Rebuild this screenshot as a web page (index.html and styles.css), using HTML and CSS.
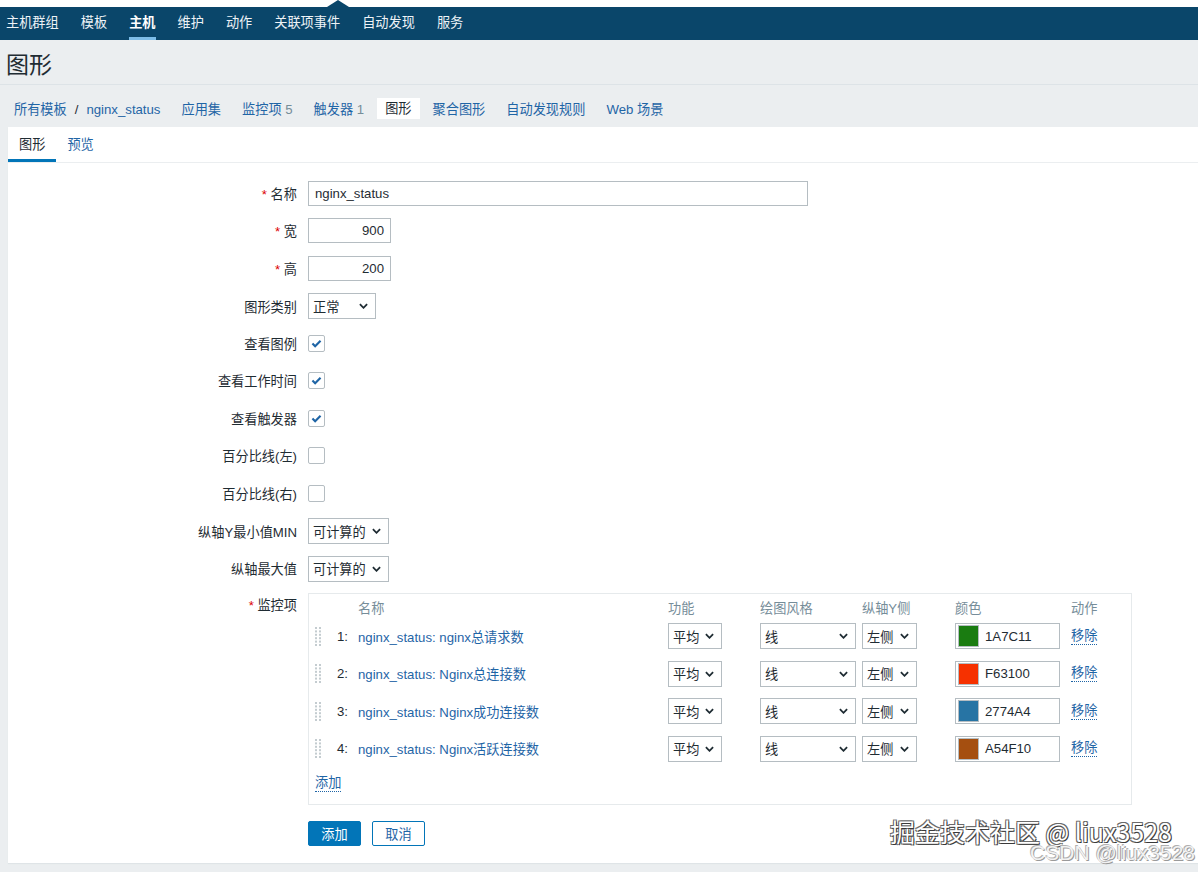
FILE: index.html
```html
<!DOCTYPE html>
<html lang="zh-CN">
<head>
<meta charset="utf-8">
<title>图形</title>
<link rel="stylesheet" href="styles.css">
</head>
<body>
<div class="topstrip"></div>
<nav class="mainnav">
  <a class="nav-item">主机群组</a>
  <a class="nav-item">模板</a>
  <a class="nav-item active">主机</a>
  <a class="nav-item">维护</a>
  <a class="nav-item">动作</a>
  <a class="nav-item">关联项事件</a>
  <a class="nav-item">自动发现</a>
  <a class="nav-item">服务</a>
</nav>
<header class="page-title"><h1>图形</h1></header>
<nav class="crumbs">
  <span class="crumb"><a>所有模板</a><span class="sep">/</span><a>nginx_status</a></span>
  <a class="crumb">应用集</a>
  <a class="crumb">监控项 <span class="count">5</span></a>
  <a class="crumb">触发器 <span class="count">1</span></a>
  <span class="crumb current">图形</span>
  <a class="crumb">聚合图形</a>
  <a class="crumb">自动发现规则</a>
  <a class="crumb">Web 场景</a>
</nav>
<main class="panel">
  <div class="tabs">
    <span class="tab active">图形</span>
    <a class="tab">预览</a>
  </div>
  <form class="form">
    <div class="row">
      <label class="lbl"><span class="req">*</span> 名称</label>
      <div class="field"><span class="input w500">nginx_status</span></div>
    </div>
    <div class="row">
      <label class="lbl"><span class="req">*</span> 宽</label>
      <div class="field"><span class="input num w83">900</span></div>
    </div>
    <div class="row">
      <label class="lbl"><span class="req">*</span> 高</label>
      <div class="field"><span class="input num w83">200</span></div>
    </div>
    <div class="row">
      <label class="lbl">图形类别</label>
      <div class="field"><span class="sel w68"><span>正常</span><svg class="chev" viewBox="0 0 10 6"><path d="M1 1l4 4 4-4"/></svg></span></div>
    </div>
    <div class="row">
      <label class="lbl">查看图例</label>
      <div class="field"><span class="cb checked"><svg viewBox="0 0 12 10"><path d="M1.5 5l3 3 6-6"/></svg></span></div>
    </div>
    <div class="row">
      <label class="lbl">查看工作时间</label>
      <div class="field"><span class="cb checked"><svg viewBox="0 0 12 10"><path d="M1.5 5l3 3 6-6"/></svg></span></div>
    </div>
    <div class="row">
      <label class="lbl">查看触发器</label>
      <div class="field"><span class="cb checked"><svg viewBox="0 0 12 10"><path d="M1.5 5l3 3 6-6"/></svg></span></div>
    </div>
    <div class="row">
      <label class="lbl">百分比线(左)</label>
      <div class="field"><span class="cb"></span></div>
    </div>
    <div class="row">
      <label class="lbl">百分比线(右)</label>
      <div class="field"><span class="cb"></span></div>
    </div>
    <div class="row">
      <label class="lbl">纵轴Y最小值MIN</label>
      <div class="field"><span class="sel w81"><span>可计算的</span><svg class="chev" viewBox="0 0 10 6"><path d="M1 1l4 4 4-4"/></svg></span></div>
    </div>
    <div class="row">
      <label class="lbl">纵轴最大值</label>
      <div class="field"><span class="sel w81"><span>可计算的</span><svg class="chev" viewBox="0 0 10 6"><path d="M1 1l4 4 4-4"/></svg></span></div>
    </div>
    <div class="row items-row">
      <label class="lbl"><span class="req">*</span> 监控项</label>
      <div class="field">
        <div class="items">
          <div class="irow ihead">
            <span></span><span></span><span>名称</span><span>功能</span><span>绘图风格</span><span>纵轴Y侧</span><span>颜色</span><span>动作</span>
          </div>
          <div class="irow item">
            <span class="drag"><svg viewBox="0 0 7 19"><g><rect x="0" y="0" width="2" height="2"/><rect x="4" y="0" width="2" height="2"/><rect x="0" y="3.4" width="2" height="2"/><rect x="4" y="3.4" width="2" height="2"/><rect x="0" y="6.8" width="2" height="2"/><rect x="4" y="6.8" width="2" height="2"/><rect x="0" y="10.2" width="2" height="2"/><rect x="4" y="10.2" width="2" height="2"/><rect x="0" y="13.6" width="2" height="2"/><rect x="4" y="13.6" width="2" height="2"/><rect x="0" y="17" width="2" height="2"/><rect x="4" y="17" width="2" height="2"/></g></svg></span>
            <span class="no">1:</span>
            <a class="link">nginx_status: nginx总请求数</a>
            <span class="sel w54"><span>平均</span><svg class="chev" viewBox="0 0 10 6"><path d="M1 1l4 4 4-4"/></svg></span>
            <span class="sel w96"><span>线</span><svg class="chev" viewBox="0 0 10 6"><path d="M1 1l4 4 4-4"/></svg></span>
            <span class="sel w55"><span>左侧</span><svg class="chev" viewBox="0 0 10 6"><path d="M1 1l4 4 4-4"/></svg></span>
            <span class="color"><span class="swatch" style="background:#1A7C11"></span>1A7C11</span>
            <a class="dotted">移除</a>
          </div>
          <div class="irow item">
            <span class="drag"><svg viewBox="0 0 7 19"><g><rect x="0" y="0" width="2" height="2"/><rect x="4" y="0" width="2" height="2"/><rect x="0" y="3.4" width="2" height="2"/><rect x="4" y="3.4" width="2" height="2"/><rect x="0" y="6.8" width="2" height="2"/><rect x="4" y="6.8" width="2" height="2"/><rect x="0" y="10.2" width="2" height="2"/><rect x="4" y="10.2" width="2" height="2"/><rect x="0" y="13.6" width="2" height="2"/><rect x="4" y="13.6" width="2" height="2"/><rect x="0" y="17" width="2" height="2"/><rect x="4" y="17" width="2" height="2"/></g></svg></span>
            <span class="no">2:</span>
            <a class="link">nginx_status: Nginx总连接数</a>
            <span class="sel w54"><span>平均</span><svg class="chev" viewBox="0 0 10 6"><path d="M1 1l4 4 4-4"/></svg></span>
            <span class="sel w96"><span>线</span><svg class="chev" viewBox="0 0 10 6"><path d="M1 1l4 4 4-4"/></svg></span>
            <span class="sel w55"><span>左侧</span><svg class="chev" viewBox="0 0 10 6"><path d="M1 1l4 4 4-4"/></svg></span>
            <span class="color"><span class="swatch" style="background:#F63100"></span>F63100</span>
            <a class="dotted">移除</a>
          </div>
          <div class="irow item">
            <span class="drag"><svg viewBox="0 0 7 19"><g><rect x="0" y="0" width="2" height="2"/><rect x="4" y="0" width="2" height="2"/><rect x="0" y="3.4" width="2" height="2"/><rect x="4" y="3.4" width="2" height="2"/><rect x="0" y="6.8" width="2" height="2"/><rect x="4" y="6.8" width="2" height="2"/><rect x="0" y="10.2" width="2" height="2"/><rect x="4" y="10.2" width="2" height="2"/><rect x="0" y="13.6" width="2" height="2"/><rect x="4" y="13.6" width="2" height="2"/><rect x="0" y="17" width="2" height="2"/><rect x="4" y="17" width="2" height="2"/></g></svg></span>
            <span class="no">3:</span>
            <a class="link">nginx_status: Nginx成功连接数</a>
            <span class="sel w54"><span>平均</span><svg class="chev" viewBox="0 0 10 6"><path d="M1 1l4 4 4-4"/></svg></span>
            <span class="sel w96"><span>线</span><svg class="chev" viewBox="0 0 10 6"><path d="M1 1l4 4 4-4"/></svg></span>
            <span class="sel w55"><span>左侧</span><svg class="chev" viewBox="0 0 10 6"><path d="M1 1l4 4 4-4"/></svg></span>
            <span class="color"><span class="swatch" style="background:#2774A4"></span>2774A4</span>
            <a class="dotted">移除</a>
          </div>
          <div class="irow item">
            <span class="drag"><svg viewBox="0 0 7 19"><g><rect x="0" y="0" width="2" height="2"/><rect x="4" y="0" width="2" height="2"/><rect x="0" y="3.4" width="2" height="2"/><rect x="4" y="3.4" width="2" height="2"/><rect x="0" y="6.8" width="2" height="2"/><rect x="4" y="6.8" width="2" height="2"/><rect x="0" y="10.2" width="2" height="2"/><rect x="4" y="10.2" width="2" height="2"/><rect x="0" y="13.6" width="2" height="2"/><rect x="4" y="13.6" width="2" height="2"/><rect x="0" y="17" width="2" height="2"/><rect x="4" y="17" width="2" height="2"/></g></svg></span>
            <span class="no">4:</span>
            <a class="link">nginx_status: Nginx活跃连接数</a>
            <span class="sel w54"><span>平均</span><svg class="chev" viewBox="0 0 10 6"><path d="M1 1l4 4 4-4"/></svg></span>
            <span class="sel w96"><span>线</span><svg class="chev" viewBox="0 0 10 6"><path d="M1 1l4 4 4-4"/></svg></span>
            <span class="sel w55"><span>左侧</span><svg class="chev" viewBox="0 0 10 6"><path d="M1 1l4 4 4-4"/></svg></span>
            <span class="color"><span class="swatch" style="background:#A54F10"></span>A54F10</span>
            <a class="dotted">移除</a>
          </div>
          <div class="add-row"><a class="dotted">添加</a></div>
        </div>
      </div>
    </div>
    <div class="buttons">
      <button type="button" class="btn primary">添加</button>
      <button type="button" class="btn">取消</button>
    </div>
  </form>
</main>
<div class="watermark">
  <div class="wm1">掘金技术社区 @ liux3528</div>
  <div class="wm2">CSDN @liux3528</div>
</div>
</body>
</html>
```

FILE: styles.css
```css
* { box-sizing: border-box; }
html, body { margin: 0; padding: 0; }
body {
  background: #ebeef0;
  color: #1f2c33;
  font-family: "Liberation Sans", Arial, "Noto Sans CJK SC", sans-serif;
  font-size: 13.2px;
  width: 1198px;
  height: 872px;
  overflow: hidden;
  position: relative;
}
a { color: #1f65a6; text-decoration: none; cursor: pointer; }

/* top strip + main nav */
.topstrip {
  height: 7px;
  background: #fff;
  position: relative;
}
.topstrip::after {
  content: "";
  position: absolute;
  left: 327px;
  bottom: 0;
  border-left: 11px solid transparent;
  border-right: 11px solid transparent;
  border-bottom: 7px solid #0a466a;
}
.mainnav {
  height: 33px;
  background: #0a466a;
  display: flex;
  gap: 22px;
  padding-left: 6px;
}
.nav-item {
  color: #eef3f7;
  line-height: 28px;
  padding-top: 2px;
  border-bottom: 3px solid transparent;
}
.nav-item.active {
  color: #fff;
  font-weight: bold;
  border-bottom-color: #7dbde8;
}

/* page title */
.page-title {
  height: 45px;
  border-bottom: 1px solid #dde3e7;
  padding: 9px 6px 0;
}
.page-title h1 {
  margin: 0;
  font-size: 23px;
  font-weight: normal;
  line-height: 32px;
  color: #1f2c33;
}

/* breadcrumbs */
.crumbs {
  display: flex;
  gap: 5px;
  padding: 13px 6px 8px;
  height: 42px;
}
.crumb {
  line-height: 21px;
  padding: 1px 8px 0;
  color: #1f65a6;
}
.crumb .sep { color: #1f2c33; margin: 0 8px; }
.crumb .count { color: #768d99; }
.crumb.current {
  background: #fff;
  color: #1f2c33;
  padding: 1px 8px 0;
  height: 21px;
  line-height: 20px;
}

/* panel */
.panel {
  margin-left: 8px;
  background: #fff;
  height: 736px;
  box-shadow: 0 1px 1px #dfe4e7;
}
.tabs {
  display: flex;
  height: 36px;
  border-bottom: 1px solid #ebeef0;
}
.tab {
  padding: 3px 11px 0;
  height: 35px;
  line-height: 29px;
  border-bottom: 3px solid transparent;
  color: #1f65a6;
}
.tab.active {
  color: #1f2c33;
  border-bottom-color: #0275b8;
}

/* form */
.form { padding-top: 17.5px; }
.row {
  display: grid;
  grid-template-columns: 289px 1fr;
  column-gap: 11px;
  align-items: center;
  height: 25px;
  margin-bottom: 12.5px;
}
.lbl { text-align: right; color: #1f2c33; }
.req { color: #dc0000; }
.field { display: flex; align-items: center; }

.input {
  display: block;
  height: 25px;
  line-height: 23px;
  border: 1px solid #b5bdc2;
  padding: 0 6px;
  color: #1f2c33;
  background: #fff;
}
.input.num { text-align: right; }
.w500 { width: 500px; }
.w83 { width: 83px; }

.sel {
  display: flex;
  align-items: center;
  justify-content: space-between;
  height: 26px;
  border: 1px solid #b5bdc2;
  padding: 0 7px 0 4px;
  background: #fff;
  color: #1f2c33;
}
.chev { width: 9px; height: 6px; flex: none; }
.chev path { fill: none; stroke: #1f2c33; stroke-width: 2; }
.w68 { width: 68px; }
.w81 { width: 81px; }
.w54 { width: 54px; }
.w96 { width: 96px; }
.w55 { width: 55px; }

.cb {
  display: block;
  width: 17px;
  height: 17px;
  border: 1px solid #b5bdc2;
  border-radius: 2px;
  background: #fff;
  position: relative;
}
.cb svg {
  position: absolute;
  left: 2px;
  top: 3px;
  width: 11px;
  height: 9px;
}
.cb svg path { fill: none; stroke: #1f65a6; stroke-width: 2.4; }

/* items table */
.row.items-row {
  height: auto;
  align-items: start;
  margin-bottom: 16px;
}
.items-row .lbl { line-height: 20px; padding-top: 3px; }
.items {
  width: 824px;
  border: 1px solid #e6eaec;
  padding: 1px 0 11px 0;
}
.irow {
  display: grid;
  grid-template-columns: 23px 21px 310px 92px 102px 93px 116px 1fr;
  align-items: center;
  padding-left: 5px;
}
.ihead {
  height: 24px;
  color: #768d99;
  margin-bottom: 4px;
}
.item {
  height: 26px;
  margin-bottom: 11.5px;
}
.drag { display: flex; align-items: center; }
.drag svg { width: 7px; height: 19px; margin-left: 1px; }
.drag rect { fill: #c4ccd0; }
.no { color: #1f2c33; }
.link { color: #1f65a6; white-space: nowrap; }
.color {
  display: flex;
  align-items: center;
  width: 105px;
  height: 26px;
  border: 1px solid #b5bdc2;
  color: #1f2c33;
}
.swatch {
  width: 21px;
  height: 22px;
  margin: 0 6px 0 2px;
  border: 1px solid #b5bdc2;
}
.dotted {
  color: #1f65a6;
  border-bottom: 1px dotted #1f65a6;
  justify-self: start;
  line-height: 16px;
}
.add-row {
  padding-left: 6px;
  height: 20px;
  display: flex;
  align-items: center;
}

/* buttons */
.buttons {
  display: flex;
  gap: 11px;
  padding-left: 300px;
}
.btn {
  height: 25px;
  width: 53px;
  padding: 0;
  border: 1px solid #0275b8;
  border-radius: 2px;
  background: #fff;
  color: #1f65a6;
  font: inherit;
}
.btn.primary { background: #0275b8; color: #fff; }

/* watermark overlay */
.watermark {
  position: absolute;
  left: 890px;
  top: 814px;
  width: 308px;
  pointer-events: none;
}
.wm1 {
  font-family: "Noto Sans CJK SC", sans-serif;
  font-size: 25px;
  line-height: 34px;
  color: #ffffff;
  text-shadow: 1px 1px 0 #3a3a3a, -1px -1px 0 #6a6a6a, 1px -1px 0 #6a6a6a, -1px 1px 0 #6a6a6a;
  white-space: nowrap;
}
.wm2 {
  font-family: "Liberation Sans", Arial, sans-serif;
  font-size: 21px;
  line-height: 21px;
  margin-top: -6px;
  text-align: right;
  padding-right: 3px;
  color: #f2f2f2;
  text-shadow: 1px 1px 0 #9a9a9a, -1px -1px 0 #b0b0b0;
  white-space: nowrap;
}
```
